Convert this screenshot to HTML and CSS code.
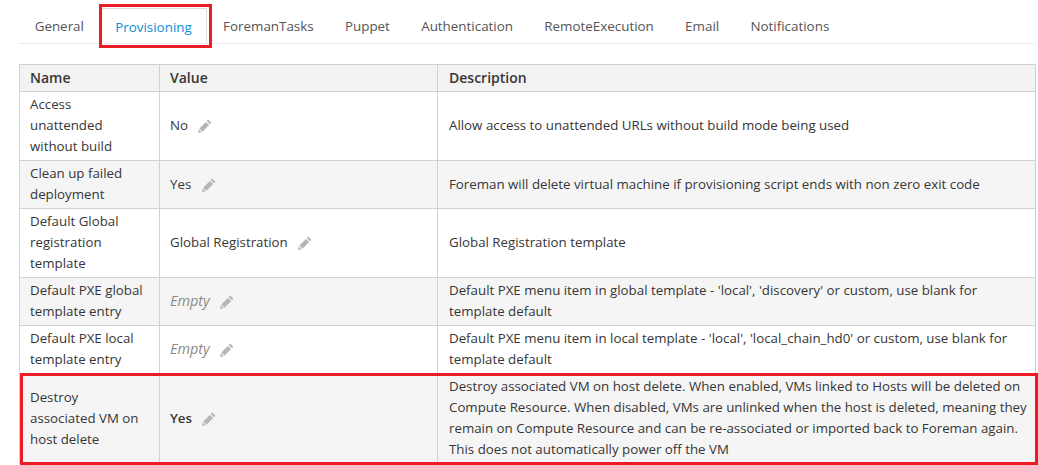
FILE: index.html
```html
<!DOCTYPE html>
<html lang="en">
<head>
    <meta charset="UTF-8">
    <title>Settings</title>
    <link rel="stylesheet" href="styles.css">
</head>
<body>
    <div class="page">
        <ul class="tabs">
            <li>General</li>
            <li class="active">Provisioning</li>
            <li>ForemanTasks</li>
            <li>Puppet</li>
            <li>Authentication</li>
            <li>RemoteExecution</li>
            <li>Email</li>
            <li>Notifications</li>
        </ul>

        <table class="settings">
            <thead>
                <tr>
                    <th class="col-name">Name</th>
                    <th class="col-value">Value</th>
                    <th class="col-desc">Description</th>
                </tr>
            </thead>
            <tbody>
                <tr>
                    <td>Access unattended without build</td>
                    <td>No <svg class="pencil" viewBox="0 0 14 14"><path d="M10.2 0.6l3.2 3.2-1.5 1.5-3.2-3.2zM7.9 2.9l3.2 3.2-6.6 6.6-3.2-3.2zM0.8 10.3l2.9 2.9-3.6 0.8z"/></svg></td>
                    <td class="col-desc">Allow access to unattended URLs without build mode being used</td>
                </tr>
                <tr class="odd">
                    <td>Clean up failed deployment</td>
                    <td>Yes <svg class="pencil" viewBox="0 0 14 14"><path d="M10.2 0.6l3.2 3.2-1.5 1.5-3.2-3.2zM7.9 2.9l3.2 3.2-6.6 6.6-3.2-3.2zM0.8 10.3l2.9 2.9-3.6 0.8z"/></svg></td>
                    <td class="col-desc">Foreman will delete virtual machine if provisioning script ends with non zero exit code</td>
                </tr>
                <tr>
                    <td>Default Global registration template</td>
                    <td>Global Registration <svg class="pencil" viewBox="0 0 14 14"><path d="M10.2 0.6l3.2 3.2-1.5 1.5-3.2-3.2zM7.9 2.9l3.2 3.2-6.6 6.6-3.2-3.2zM0.8 10.3l2.9 2.9-3.6 0.8z"/></svg></td>
                    <td class="col-desc">Global Registration template</td>
                </tr>
                <tr class="odd">
                    <td>Default PXE global template entry</td>
                    <td><em>Empty</em> <svg class="pencil" viewBox="0 0 14 14"><path d="M10.2 0.6l3.2 3.2-1.5 1.5-3.2-3.2zM7.9 2.9l3.2 3.2-6.6 6.6-3.2-3.2zM0.8 10.3l2.9 2.9-3.6 0.8z"/></svg></td>
                    <td class="col-desc">Default PXE menu item in global template - 'local', 'discovery' or custom, use blank for template default</td>
                </tr>
                <tr>
                    <td>Default PXE local template entry</td>
                    <td><em>Empty</em> <svg class="pencil" viewBox="0 0 14 14"><path d="M10.2 0.6l3.2 3.2-1.5 1.5-3.2-3.2zM7.9 2.9l3.2 3.2-6.6 6.6-3.2-3.2zM0.8 10.3l2.9 2.9-3.6 0.8z"/></svg></td>
                    <td class="col-desc">Default PXE menu item in local template - 'local', 'local_chain_hd0' or custom, use blank for template default</td>
                </tr>
                <tr class="odd">
                    <td>Destroy associated VM on host delete</td>
                    <td><strong>Yes</strong> <svg class="pencil" viewBox="0 0 14 14"><path d="M10.2 0.6l3.2 3.2-1.5 1.5-3.2-3.2zM7.9 2.9l3.2 3.2-6.6 6.6-3.2-3.2zM0.8 10.3l2.9 2.9-3.6 0.8z"/></svg></td>
                    <td class="col-desc">Destroy associated VM on host delete. When enabled, VMs linked to Hosts will be deleted on Compute Resource. When disabled, VMs are unlinked when the host is deleted, meaning they remain on Compute Resource and can be re-associated or imported back to Foreman again. This does not automatically power off the VM</td>
                </tr>
            </tbody>
        </table>

        <!-- red annotation boxes drawn over the screenshot -->
        <div class="mark mark-tab"></div>
        <div class="mark mark-row"></div>
    </div>
</body>
</html>
```

FILE: styles.css
```css
* {
    margin: 0;
    padding: 0;
    box-sizing: border-box;
}

html, body {
    height: 465px;
    overflow: hidden;
}

body {
    font-family: "Open Sans", "Noto Sans", sans-serif;
    font-size: 13.3px;
    line-height: 21px;
    background-color: #fff;
    color: #363636;
}

.page {
    position: relative;
    height: 465px;
    padding: 6px 2px 0 19px;
}

.tabs {
    display: flex;
    list-style: none;
    height: 38px;
    border-bottom: 1px solid #ededed;
    margin-bottom: 20px;
    font-size: 13.4px;
}

.tabs li {
    padding: 10px 15.65px 0;
    color: #555;
}

.tabs li.active {
    color: #0d8fd8;
    margin-top: 2px;
    padding: 8px 14.65px 0;
    border: 1px solid #ddd;
    border-bottom: none;
}

.settings {
    width: 1017px;
    border-collapse: collapse;
    table-layout: fixed;
}

.settings th,
.settings td {
    border: 1px solid #d1d1d1;
    padding: 2px 14px 3px 10px;
    text-align: left;
    vertical-align: middle;
}

.settings th {
    background-color: #f3f3f3;
    font-size: 14px;
    font-weight: 600;
}

.settings .col-desc {
    padding-left: 11px;
    padding-right: 8px;
}

.col-name {
    width: 140px;
}

.col-value {
    width: 278px;
}

.odd td {
    background-color: #f5f5f5;
}

em {
    color: #8a8a8a;
    font-size: 14.4px;
}

strong {
    font-weight: 600;
}

.pencil {
    width: 14px;
    height: 14px;
    fill: #b5b5b5;
    margin-left: 7px;
    vertical-align: -3px;
}

.mark {
    position: absolute;
    border: 3px solid #ed1c24;
}

.mark-tab {
    left: 99px;
    top: 4px;
    width: 113px;
    height: 44px;
}

.mark-row {
    left: 20px;
    top: 373px;
    width: 1018px;
    height: 92px;
}
```
